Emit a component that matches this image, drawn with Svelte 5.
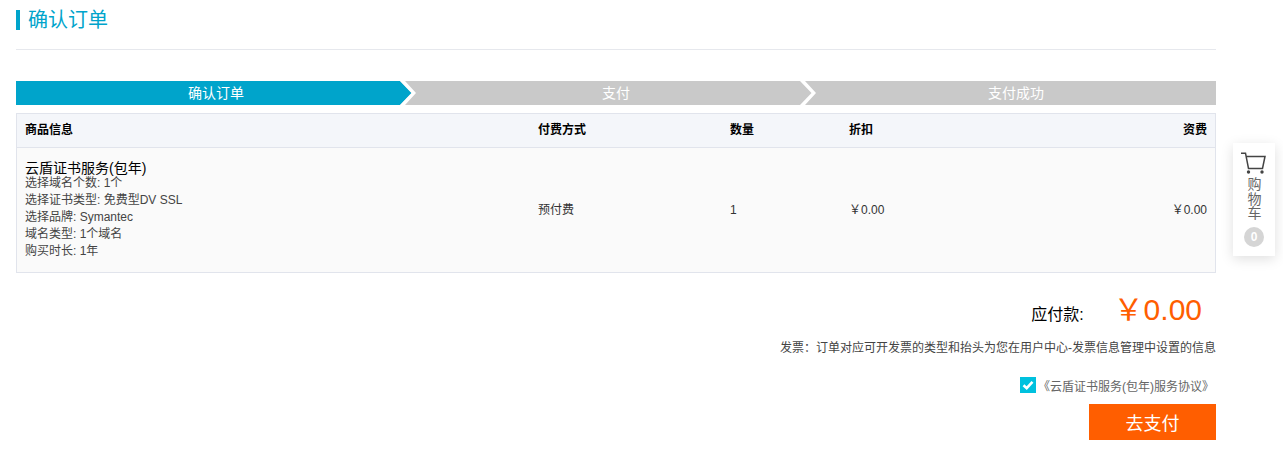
<script>
  const details = ['选择域名个数: 1个', '选择证书类型: 免费型DV SSL', '选择品牌: Symantec', '域名类型: 1个域名', '购买时长: 1年'];
</script>

<div class="page">
  <main class="main">
    <header class="head"><h1>确认订单</h1></header>

    <div class="steps">
      <div class="step active">确认订单<svg class="chev" viewBox="0 0 16 24"><path class="fill-g" d="M0 0H16V24H0Z"/><path class="fill-a" d="M0 0L11.5 12L0 24Z"/><path class="line" d="M0 0H5L16 12L5 24H0L11.5 12Z"/></svg></div>
      <div class="step">支付<svg class="chev" viewBox="0 0 16 24"><path class="line" d="M0 0H5L16 12L5 24H0L11.5 12Z"/></svg></div>
      <div class="step">支付成功</div>
    </div>

    <div class="table">
      <div class="row th">
        <div class="c1">商品信息</div><div class="c2">付费方式</div><div class="c3">数量</div><div class="c4">折扣</div><div class="c5">资费</div>
      </div>
      <div class="row td">
        <div class="c1">
          <div class="name">云盾证书服务(包年)</div>
          {#each details as d}<div class="detail">{d}</div>{/each}
        </div>
        <div class="c2">预付费</div><div class="c3 qty">1</div><div class="c4">￥0.00</div><div class="c5">￥0.00</div>
      </div>
    </div>

    <div class="total"><span class="label">应付款:</span><span class="amount">￥0.00</span></div>
    <p class="invoice">发票：订单对应可开发票的类型和抬头为您在用户中心-发票信息管理中设置的信息</p>
    <div class="agree">
      <span class="check"><svg viewBox="0 0 16 16" width="16" height="16"><path d="M3.5 8.2L6.7 11.2L12.5 4.8" fill="none" stroke="#fff" stroke-width="2.6"/></svg></span>
      <span class="agree-text">《云盾证书服务(包年)服务协议》</span>
    </div>
    <div class="actions"><button class="pay">去支付</button></div>
  </main>

  <aside class="cart">
    <svg class="cart-icon" viewBox="0 0 26 24" width="26" height="24">
      <path d="M1 1.2H5.5L8.5 16.5H22.5L25 4.5H6" fill="none" stroke="#444" stroke-width="1.5"/>
      <circle cx="8.5" cy="20" r="1.7" fill="#444"/><circle cx="22" cy="20" r="1.7" fill="#444"/>
    </svg>
    <div class="cart-text">购<br>物<br>车</div>
    <div class="badge">0</div>
  </aside>
</div>

<style>
  :global(body) { margin: 0; background: #fff; font-family: "Liberation Sans", "Noto Sans CJK SC", sans-serif; }
  .page { position: relative; height: 469px; overflow: hidden; padding-left: 16px; }
  .main { width: 1200px; }
  .head { border-bottom: 1px solid #e6e8ed; padding-top: 10px; height: 39px; }
  h1 { margin: 0; border-left: 4px solid #00a4cb; padding-left: 8px; font-size: 20px; line-height: 20px; font-weight: 400; color: #00a4cb; }
  .steps { display: flex; margin-top: 31px; height: 24px; }
  .step { position: relative; flex: 1; background: #c9c9c9; color: #fff; font-size: 14px; line-height: 24px; text-align: center; }
  .step.active { background: #00a4cb; }
  .chev { position: absolute; right: 0; top: 0; width: 16px; height: 24px; }
  .fill-a { fill: #00a4cb; }
  .fill-g { fill: #c9c9c9; }
  .line { fill: #fff; }
  .table { margin-top: 8px; border: 1px solid #e1e4ec; font-size: 12px; color: #333; height: 158px; }
  .row { display: flex; padding: 0 8px; box-sizing: border-box; }
  .th { height: 34px; padding-bottom: 4px; background: #f4f6fa; border-bottom: 1px solid #e1e4ec; align-items: center; font-weight: 700; color: #000; }
  .td { height: 124px; padding-bottom: 4px; background: #fafafa; align-items: center; }
  .c1 { width: 513px; }
  .c2 { width: 192px; }
  .c3 { width: 119px; }
  .qty { padding-top: 3px; }
  .c4 { width: 150px; }
  .c5 { flex: 1; text-align: right; }
  .name { font-size: 14px; line-height: 14px; color: #000; margin-top: 5px; }
  .detail { line-height: 17px; color: #444; }
  .total { display: flex; justify-content: flex-end; align-items: baseline; padding: 16px 14px 0 0; box-sizing: border-box; height: 66px; }
  .label { font-size: 16px; color: #000; margin-right: 30px; }
  .amount { font-size: 30px; line-height: 42px; color: #ff5e00; }
  .invoice { margin: 0; font-size: 12px; line-height: 18px; color: #444; text-align: right; }
  .agree { display: flex; justify-content: flex-end; align-items: center; margin-top: 18px; height: 20px; padding-right: 2px; }
  .check { width: 16px; height: 16px; background: #00c1de; margin-right: 2px; display: flex; }
  .agree-text { font-size: 12px; color: #666; }
  .actions { display: flex; justify-content: flex-end; margin-top: 9px; }
  .pay { width: 127px; height: 36px; background: #ff5e00; border: 0; padding: 0; color: #fff; font: 18px "Liberation Sans", "Noto Sans CJK SC", sans-serif; }
  .cart { position: absolute; left: 1233px; top: 143px; width: 42px; height: 113px; background: #fff; box-shadow: 0 3px 12px rgba(0,0,0,.13); display: flex; flex-direction: column; align-items: center; box-sizing: border-box; padding-top: 9px; }
  .cart-icon { display: block; margin-left: -2px; }
  .cart-text { font-size: 14px; line-height: 14.5px; color: #666; text-align: center; margin-top: 1px; margin-left: 1px; }
  .badge { width: 20px; height: 20px; border-radius: 50%; background: #d5d5d5; color: #fff; font-size: 12px; font-weight: 700; line-height: 20px; text-align: center; margin-top: 6px; }
</style>
